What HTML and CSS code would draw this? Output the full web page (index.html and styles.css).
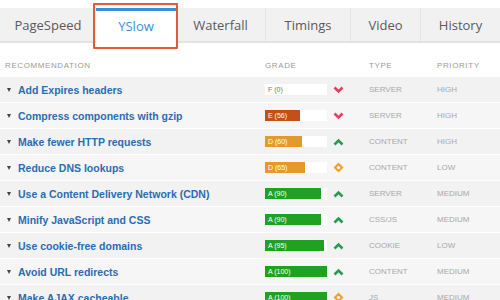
FILE: index.html
```html
<!DOCTYPE html>
<html>
<head>
<meta charset="utf-8">
<link rel="stylesheet" href="styles.css">
</head>
<body>
<nav class="tabs">
  <div class="tab t-ps">PageSpeed</div>
  <div class="tab t-ys active">YSlow</div>
  <div class="tab t-wf">Waterfall</div>
  <div class="tab t-tm sep">Timings</div>
  <div class="tab t-vd sep">Video</div>
  <div class="tab t-hs sep">History</div>
</nav>
<div class="table">
  <div class="head">
    <div>Recommendation</div><div>Grade</div><div></div><div>Type</div><div>Priority</div>
  </div>
  <div class="row odd">
    <div class="name"><span class="tri"></span>Add Expires headers</div>
    <div class="grade"><div class="bar"><span class="lbl dark">F (0)</span></div></div>
    <div class="ic"><svg width="11" height="8" viewBox="0 0 11 8"><path d="M1.5 1.5 L5.5 5.5 L9.5 1.5" fill="none" stroke="#e2405e" stroke-width="2.6"/></svg></div>
    <div class="type">Server</div><div class="prio">High</div>
  </div>
  <div class="row">
    <div class="name"><span class="tri"></span>Compress components with gzip</div>
    <div class="grade"><div class="bar"><div class="fill e" style="width:56%"></div><span class="lbl">E (56)</span></div></div>
    <div class="ic"><svg width="11" height="8" viewBox="0 0 11 8"><path d="M1.5 1.5 L5.5 5.5 L9.5 1.5" fill="none" stroke="#e2405e" stroke-width="2.6"/></svg></div>
    <div class="type">Server</div><div class="prio">High</div>
  </div>
  <div class="row odd">
    <div class="name"><span class="tri"></span>Make fewer HTTP requests</div>
    <div class="grade"><div class="bar"><div class="fill d" style="width:60%"></div><span class="lbl">D (60)</span></div></div>
    <div class="ic"><svg width="11" height="8" viewBox="0 0 11 8"><path d="M1.5 6.5 L5.5 2.5 L9.5 6.5" fill="none" stroke="#2a9a52" stroke-width="2.6"/></svg></div>
    <div class="type">Content</div><div class="prio">High</div>
  </div>
  <div class="row">
    <div class="name"><span class="tri"></span>Reduce DNS lookups</div>
    <div class="grade"><div class="bar"><div class="fill d" style="width:65%"></div><span class="lbl">D (65)</span></div></div>
    <div class="ic"><svg width="11" height="11" viewBox="0 0 11 11"><path d="M5.5 0.5 L10.5 5.5 L5.5 10.5 L0.5 5.5 Z" fill="#f0a030"/><circle cx="5.5" cy="5.5" r="1.6" fill="#fff"/></svg></div>
    <div class="type">Content</div><div class="prio">Low</div>
  </div>
  <div class="row odd">
    <div class="name"><span class="tri"></span>Use a Content Delivery Network (CDN)</div>
    <div class="grade"><div class="bar"><div class="fill a" style="width:90%"></div><span class="lbl">A (90)</span></div></div>
    <div class="ic"><svg width="11" height="8" viewBox="0 0 11 8"><path d="M1.5 6.5 L5.5 2.5 L9.5 6.5" fill="none" stroke="#2a9a52" stroke-width="2.6"/></svg></div>
    <div class="type">Server</div><div class="prio">Medium</div>
  </div>
  <div class="row">
    <div class="name"><span class="tri"></span>Minify JavaScript and CSS</div>
    <div class="grade"><div class="bar"><div class="fill a" style="width:90%"></div><span class="lbl">A (90)</span></div></div>
    <div class="ic"><svg width="11" height="8" viewBox="0 0 11 8"><path d="M1.5 6.5 L5.5 2.5 L9.5 6.5" fill="none" stroke="#2a9a52" stroke-width="2.6"/></svg></div>
    <div class="type">CSS/JS</div><div class="prio">Medium</div>
  </div>
  <div class="row odd">
    <div class="name"><span class="tri"></span>Use cookie-free domains</div>
    <div class="grade"><div class="bar"><div class="fill a" style="width:95%"></div><span class="lbl">A (95)</span></div></div>
    <div class="ic"><svg width="11" height="8" viewBox="0 0 11 8"><path d="M1.5 6.5 L5.5 2.5 L9.5 6.5" fill="none" stroke="#2a9a52" stroke-width="2.6"/></svg></div>
    <div class="type">Cookie</div><div class="prio">Low</div>
  </div>
  <div class="row">
    <div class="name"><span class="tri"></span>Avoid URL redirects</div>
    <div class="grade"><div class="bar"><div class="fill a" style="width:100%"></div><span class="lbl">A (100)</span></div></div>
    <div class="ic"><svg width="11" height="8" viewBox="0 0 11 8"><path d="M1.5 6.5 L5.5 2.5 L9.5 6.5" fill="none" stroke="#2a9a52" stroke-width="2.6"/></svg></div>
    <div class="type">Content</div><div class="prio">Medium</div>
  </div>
  <div class="row odd">
    <div class="name"><span class="tri"></span>Make AJAX cacheable</div>
    <div class="grade"><div class="bar"><div class="fill a" style="width:100%"></div><span class="lbl">A (100)</span></div></div>
    <div class="ic"><svg width="11" height="11" viewBox="0 0 11 11"><path d="M5.5 0.5 L10.5 5.5 L5.5 10.5 L0.5 5.5 Z" fill="#f0a030"/><circle cx="5.5" cy="5.5" r="1.6" fill="#fff"/></svg></div>
    <div class="type">JS</div><div class="prio">Medium</div>
  </div>
</div>
</body>
</html>
```
FILE: styles.css
```css
html, body { margin: 0; padding: 0; background: #fff; overflow: hidden; }
body { width: 500px; height: 300px; font-family: "Liberation Sans", Arial, sans-serif; }

.tabs {
  margin-top: 8px;
  height: 33px;
  background: #f1f1f1;
  border-bottom: 2px solid #e3e3e3;
  display: flex;
}
.tab {
  font-family: "Open Sans", Lato, sans-serif;
  font-size: 13px;
  color: #5a5a5a;
  display: flex;
  align-items: center;
  justify-content: center;
  box-sizing: border-box;
}
.sep { border-left: 1px solid #e4e4e4; }
.t-ps { width: 96px; }
.t-ys { width: 80px; }
.t-wf { width: 89px; }
.t-tm { width: 85px; }
.t-vd { width: 70px; }
.t-hs { width: 80px; }
.tab.active {
  position: relative;
  background: #fff;
  color: #3d8fd4;
  border-top: 3px solid #3d8fd4;
  height: 35px;
  padding-bottom: 3px;
}
.tab.active::after {
  content: "";
  position: absolute;
  left: -3px; right: -2px; top: -8px; bottom: -6px;
  border: 2px solid #e6583b;
  border-radius: 1px;
}

.table { margin-top: 13px; }
.head, .row {
  display: grid;
  grid-template-columns: 265px 68px 36px 68px 1fr;
  align-items: center;
}
.head {
  height: 19px;
  padding-bottom: 2px;
  font-size: 8px;
  letter-spacing: 0.6px;
  color: #9a9a9a;
  text-transform: uppercase;
}
.head > div:first-child { padding-left: 5px; }
.row {
  height: 25px;
  margin-bottom: 1px;
  background: #f6f6f6;
}
.row.odd { background: #f2f2f2; }
.name {
  padding-left: 7px;
  display: flex;
  align-items: center;
  font-size: 10.5px;
  font-weight: bold;
  color: #2b6cb3;
  white-space: nowrap;
}
.tri {
  width: 0; height: 0;
  border-left: 2.5px solid transparent;
  border-right: 2.5px solid transparent;
  border-top: 4px solid #444;
  margin-right: 7px;
}
.bar {
  position: relative;
  width: 62px;
  height: 11px;
  background: #fff;
  display: flex;
  align-items: center;
}
.fill { position: absolute; left: 0; top: 0; bottom: 0; }
.fill.e { background: #c1501b; }
.fill.d { background: #e39a2c; }
.fill.a { background: #21a121; }
.lbl {
  position: relative;
  font-size: 7px;
  color: #fff;
  padding-left: 3px;
}
.lbl.dark { color: #777; }
.ic { display: flex; align-items: center; padding-left: 0; }
.ic svg { display: block; }
.type, .prio {
  font-size: 8px;
  color: #a8a8a8;
  text-transform: uppercase;
}
```
